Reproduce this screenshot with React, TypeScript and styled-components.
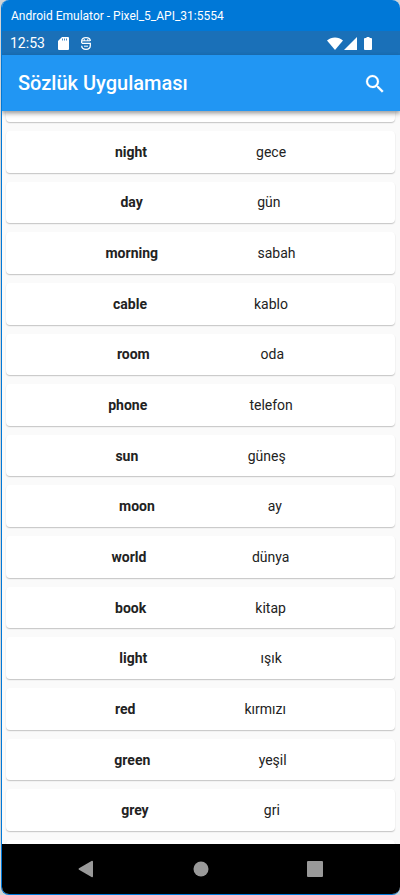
import React from "react";
import styled, { createGlobalStyle } from "styled-components";

const GlobalStyle = createGlobalStyle`
  * { box-sizing: border-box; }
  body { margin: 0; background: #d2d4d6; }
`;

const Window = styled.div`
  display: flex;
  flex-direction: column;
  min-height: 100vh;
  margin-left: 1px;
  border-left: 1px solid #0078d7;
  border-bottom: 1px solid #0078d7;
  border-radius: 8px;
  overflow: hidden;
  background: #fafafa;
  font-family: Roboto, "Liberation Sans", sans-serif;
`;

const TitleBar = styled.div`
  height: 31px;
  padding-left: 9px;
  background: #0078d7;
  color: #fff;
  font: 12px/32px Roboto, "Open Sans", sans-serif;
  white-space: nowrap;
`;

const StatusBar = styled.div`
  display: flex;
  align-items: center;
  height: 24px;
  padding: 0 28px 0 8px;
  background: #1a70b8;
  color: #fff;
`;

const Clock = styled.time`
  font-size: 14px;
  line-height: 24px;
  margin-right: 13px;
`;

const StatusIcon = styled.svg<{ $gap?: number }>`
  display: block;
  flex: none;
  margin-right: ${(p) => p.$gap ?? 0}px;
`;

const Spacer = styled.span`
  flex: 1;
`;

const AppBar = styled.header`
  position: relative;
  z-index: 1;
  display: flex;
  align-items: center;
  justify-content: space-between;
  height: 56px;
  padding: 1px 13px 0 16px;
  background: #2196f3;
  color: #fff;
  box-shadow: 0 2px 4px rgba(0, 0, 0, 0.3), 0 3px 6px rgba(0, 0, 0, 0.14);
`;

const AppTitle = styled.h1`
  margin: 0;
  font-size: 20px;
  line-height: 25px;
  font-weight: 500;
`;

const IconButton = styled.button`
  display: grid;
  place-items: center;
  padding: 0;
  border: 0;
  background: none;
  color: inherit;
`;

const WordList = styled.ul`
  flex: 1;
  display: grid;
  grid-template-rows: 11px repeat(14, minmax(40px, 1fr)) 4px;
  gap: 9px;
  margin: 0;
  padding: 0 5px 0 4px;
  list-style: none;
`;

const Card = styled.li<{ $cut?: "top" | "bottom" }>`
  display: flex;
  align-items: center;
  justify-content: space-evenly;
  border-radius: ${(p) =>
    p.$cut === "top" ? "0 0 4px 4px" : p.$cut === "bottom" ? "4px 4px 0 0" : "4px"};
  background: #fff;
  box-shadow: 0 1px 1px rgba(0, 0, 0, 0.16), 0 1px 2px rgba(0, 0, 0, 0.07);
  color: #222;
  font-size: 14px;
  line-height: 20px;
`;

const Word = styled.b`
  font-weight: 700;
`;

const NavBar = styled.nav`
  display: flex;
  align-items: center;
  justify-content: space-around;
  height: 50px;
  padding: 0 28px 0 26px;
  background: #000;
  color: #999;
`;

const words: [string, string][] = [
  ["night", "gece"],
  ["day", "gün"],
  ["morning", "sabah"],
  ["cable", "kablo"],
  ["room", "oda"],
  ["phone", "telefon"],
  ["sun", "güneş"],
  ["moon", "ay"],
  ["world", "dünya"],
  ["book", "kitap"],
  ["light", "ışık"],
  ["red", "kırmızı"],
  ["green", "yeşil"],
  ["grey", "gri"],
];

export default function App() {
  return (
    <>
      <GlobalStyle />
      <Window>
        <TitleBar>Android Emulator - Pixel_5_API_31:5554</TitleBar>
        <StatusBar>
          <Clock>12:53</Clock>
          <StatusIcon $gap={12} width="11" height="13" viewBox="0 0 11 13">
            <path d="M4 0h6a1 1 0 0 1 1 1v11a1 1 0 0 1-1 1H1a1 1 0 0 1-1-1V4z" fill="#fff" />
            <path d="M4.5 1.5v2M6.5 1.5v2M8.5 1.5v2" stroke="#1a70b8" strokeWidth="0.8" />
          </StatusIcon>
          <StatusIcon width="10" height="13" viewBox="0 0 10 13" fill="none" stroke="#fff">
            <path d="M.7 6V4C.7 1.8 2.3.7 5 .7S9.3 1.8 9.3 4M.7 6.300h8.600V8.500c0 2.300-1.800 3.800-4.300 3.800S.7 10.800.7 8.800" strokeWidth="1.3" />
            <path d="M1 3.800h8M3.200 2v2M6.800 2v2M3 9.200h4" strokeWidth="1" />
          </StatusIcon>
          <Spacer />
          <StatusIcon $gap={1} width="16" height="13" viewBox="0 0 16 13">
            <path d="M0 3.500C4.500-.5 11.500-.5 16 3.500L8 13z" fill="#fff" />
          </StatusIcon>
          <StatusIcon $gap={7} width="13" height="13" viewBox="0 0 13 13">
            <path d="M13 0v13H0z" fill="#fff" />
          </StatusIcon>
          <StatusIcon width="8" height="13" viewBox="0 0 8 13">
            <path d="M2.500 0h3v1H7a1 1 0 0 1 1 1v10a1 1 0 0 1-1 1H1a1 1 0 0 1-1-1V2a1 1 0 0 1 1-1h1.500z" fill="#fff" />
          </StatusIcon>
        </StatusBar>
        <AppBar>
          <AppTitle>Sözlük Uygulaması</AppTitle>
          <IconButton aria-label="Ara">
            <svg width="24" height="24" viewBox="0 0 24 24" fill="currentColor" stroke="currentColor" strokeWidth="0.2">
              <path d="M15.500 14h-.79l-.28-.27A6.471 6.471 0 0 0 16 9.500 6.500 6.500 0 1 0 9.500 16c1.610 0 3.090-.59 4.230-1.570l.27.28v.79l5 4.990L20.490 19l-4.990-5zm-6 0C7.010 14 5 11.990 5 9.500S7.010 5 9.500 5 14 7.010 14 9.500 11.990 14 9.500 14z" />
            </svg>
          </IconButton>
        </AppBar>
        <WordList>
          <Card $cut="top" aria-hidden="true" />
          {words.map(([en, tr]) => (
            <Card key={en}>
              <Word>{en}</Word>
              <span>{tr}</span>
            </Card>
          ))}
          <Card $cut="bottom" aria-hidden="true" />
        </WordList>
        <NavBar>
          <IconButton aria-label="Geri">
            <svg width="18" height="18" viewBox="0 0 18 18" fill="currentColor">
              <path d="M15 .8a1 1 0 0 1 1 1v14.400a1 1 0 0 1-1.500.8L2 9.800a1 1 0 0 1 0-1.600L14.500 1z" />
            </svg>
          </IconButton>
          <IconButton aria-label="Ana ekran">
            <svg width="16" height="16" viewBox="0 0 16 16" fill="currentColor">
              <circle cx="8" cy="8" r="7.500" />
            </svg>
          </IconButton>
          <IconButton aria-label="Son uygulamalar">
            <svg width="16" height="16" viewBox="0 0 16 16" fill="currentColor">
              <rect width="16" height="16" rx="1" />
            </svg>
          </IconButton>
        </NavBar>
      </Window>
    </>
  );
}
